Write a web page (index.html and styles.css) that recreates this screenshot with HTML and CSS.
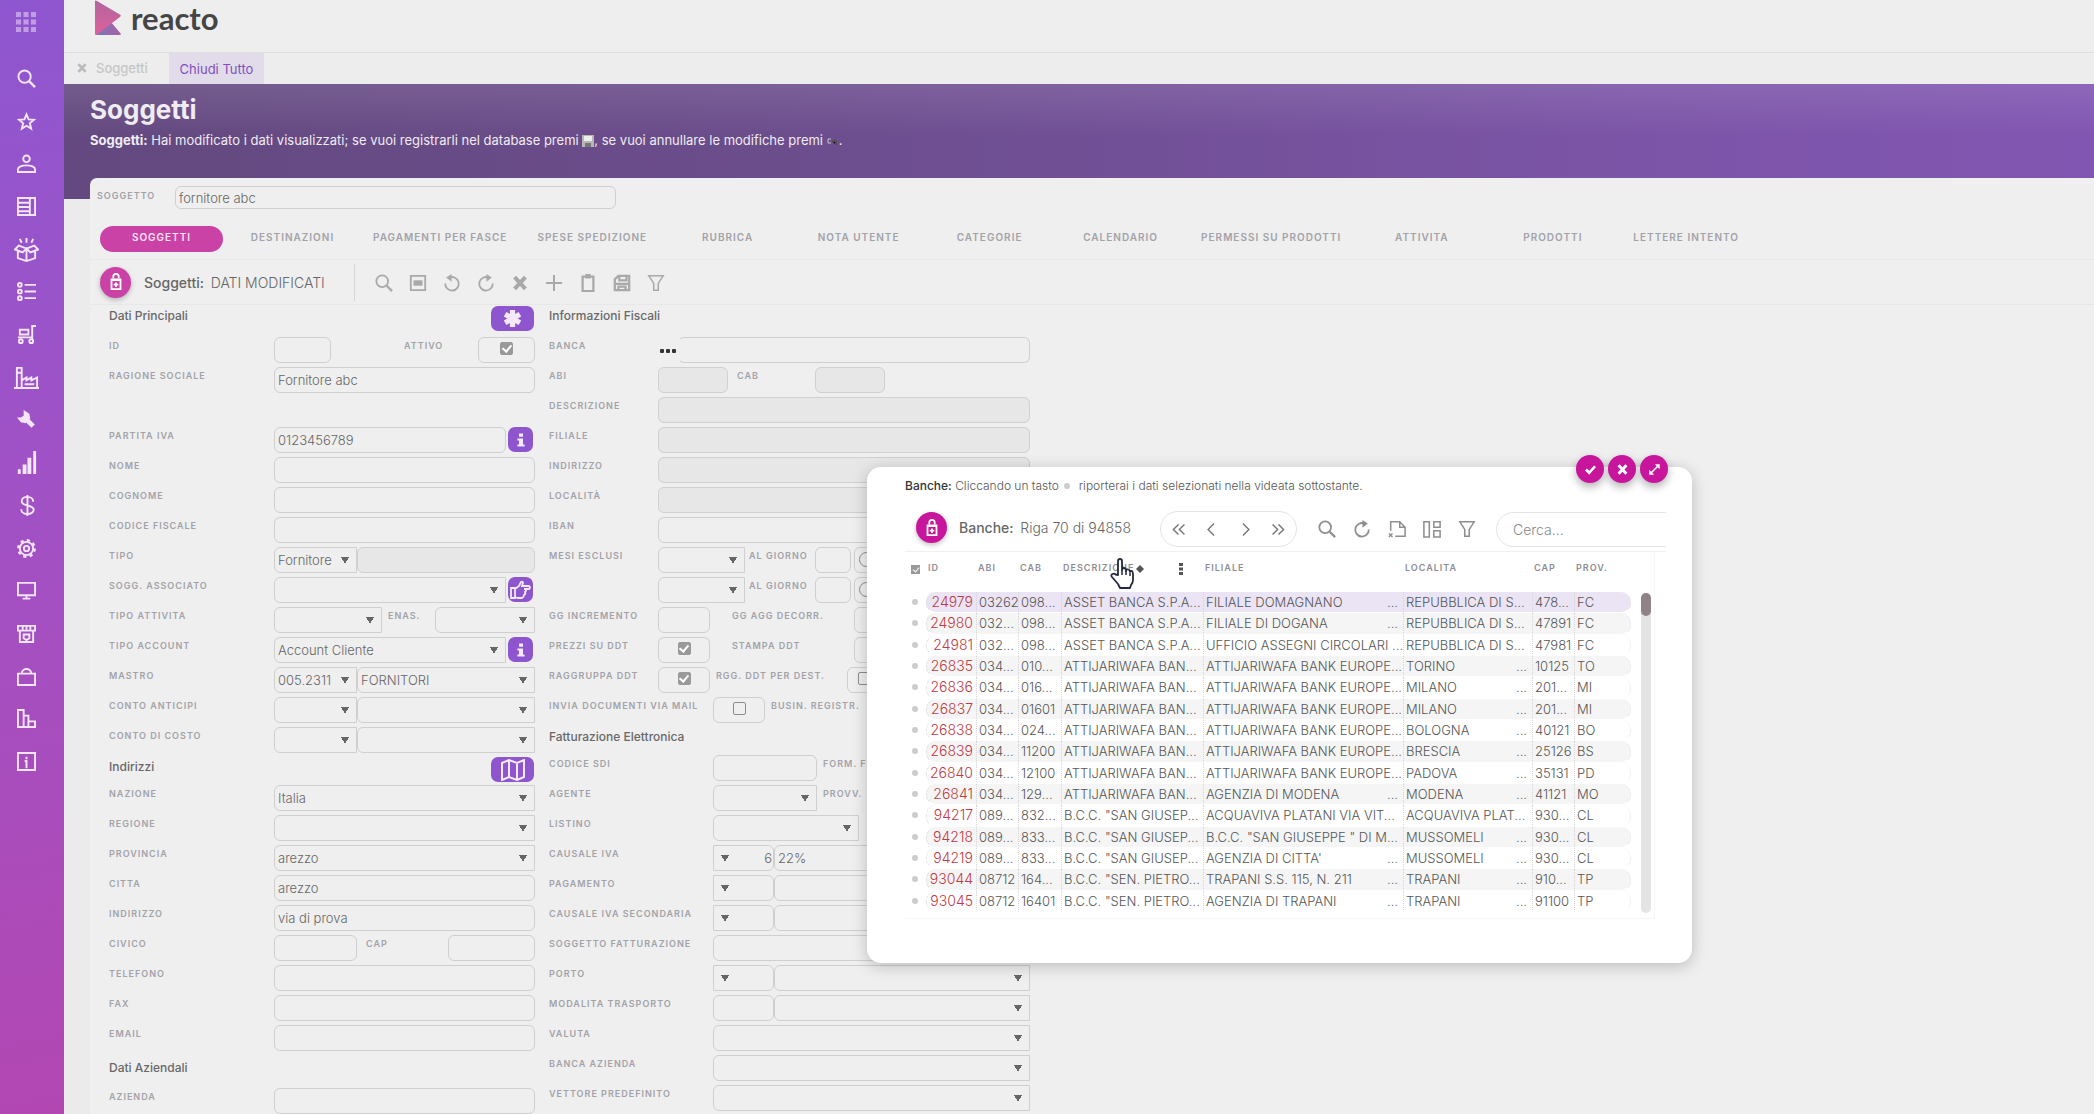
FILE: index.html
```html
<!DOCTYPE html>
<html lang="it">
<head>
    <meta charset="UTF-8">
    <meta name="viewport" content="width=device-width, initial-scale=1.0">
    <title>Reacto - Soggetti</title>
    <link rel="stylesheet" href="styles.css">
</head>
<body>
    <!-- icons used more than once -->
    <svg class="defs" width="0" height="0">
        <symbol id="i-search" viewBox="0 0 20 20"><circle cx="8" cy="8" r="6.5" fill="none" stroke="currentColor" stroke-width="2"/><path d="M13 13l6 6" stroke="currentColor" stroke-width="2.5" fill="none"/></symbol>
        <symbol id="i-redo" viewBox="0 0 20 20"><path d="M17.5 10.5A7.5 7.5 0 1 1 13 4h-2" fill="none" stroke="currentColor" stroke-width="2"/><path d="M10.5 0l6 4-6 4.500z" fill="currentColor"/></symbol>
        <symbol id="i-filter" viewBox="0 0 20 20"><path d="M2 2h16l-5.500 8.500V18h-5v-7.500z" fill="none" stroke="currentColor" stroke-width="1.700"/></symbol>
        <symbol id="i-lock" viewBox="0 0 20 20"><path d="M7 6V4a3 3 0 0 1 6 0v2" fill="none" stroke="currentColor" stroke-width="2"/><path fill-rule="evenodd" d="M4 6h12v13H4zM6 9v8h8V9z" fill="currentColor"/><path d="M7.500 13h5M10 10.500v5" stroke="currentColor" stroke-width="2"/></symbol>
        <symbol id="i-x" viewBox="0 0 20 20"><path d="M4 3.500l12 13M16 3.500l-12 13" stroke="currentColor" stroke-width="4.500" fill="none"/></symbol>
        <symbol id="i-info" viewBox="0 0 20 20"><path d="M7.500 2h5v4h-5zM5.500 8h7v7.500h2V18h-9v-2.500h2v-5h-2z" fill="currentColor"/></symbol>
    </svg>

    <div class="app">
        <aside class="sidebar">
            <button class="apps" aria-label="App"><svg viewBox="0 0 20 20" width="20" height="20"><path fill="currentColor" d="M0 0h5v5H0zM7.500 0h5v5h-5zM15 0h5v5h-5zM0 7.500h5v5H0zM7.500 7.500h5v5h-5zM15 7.500h5v5h-5zM0 15h5v5H0zM7.500 15h5v5h-5zM15 15h5v5h-5z"/></svg></button>
            <nav>
                <a href="#" aria-label="Cerca"><svg><use href="#i-search"/></svg></a>
                <a href="#" aria-label="Preferiti"><svg viewBox="0 0 20 20"><path d="M10 2.500l2.200 5.300 5.600.4-4.300 3.700 1.400 5.600L10 14.500l-4.900 3 1.400-5.600L2.200 8.200l5.600-.4z"/></svg></a>
                <a href="#" aria-label="Soggetti"><svg viewBox="0 0 20 20"><circle cx="10" cy="5" r="3.500"/><path d="M1 19v-3c0-2.500 4.300-4 9-4s9 1.500 9 4v3z"/></svg></a>
                <a href="#" aria-label="Documenti"><svg viewBox="0 0 20 20"><path d="M1 1h18v18H1zM13.500 1v18M1 6h12M1 10.500h12M1 15h12"/></svg></a>
                <a href="#" aria-label="Magazzino"><svg class="big" viewBox="0 0 26 26"><path d="M13 12l8-3 4 4-8 3-4-4-4 4-8-3 4-4zM13 12v13M4 15v7l9 3 9-3v-7M13 1v5M6 2l2 4M20 2l-2 4"/></svg></a>
                <a href="#" aria-label="Elenchi"><svg viewBox="0 0 20 20"><circle cx="3" cy="3" r="2"/><circle cx="3" cy="10" r="2"/><circle cx="3" cy="17" r="2"/><path d="M8 3h12M8 10h12M8 17h12"/></svg></a>
                <a href="#" aria-label="Trasporti"><svg viewBox="0 0 20 20"><path d="M20 1h-4v14M3 5h9v5H3zM1 13h15"/><circle cx="4" cy="17" r="2"/><circle cx="15" cy="17" r="2"/></svg></a>
                <a href="#" aria-label="Produzione"><svg class="big" viewBox="0 0 26 26"><path d="M0 24h26M3 24V3h5v21M3 8h5M8 16l5-3v3l5-3v3l6-3v11M11 20h10"/></svg></a>
                <a href="#" aria-label="Manutenzione"><svg viewBox="0 0 20 20"><path d="M8 8l9 9" stroke-width="5"/><path class="solid" d="M7 0l6 4 1 5-5 5-5-1-4-5h4l3-2z"/></svg></a>
                <a href="#" aria-label="Statistiche"><svg class="big" viewBox="0 0 26 26"><path class="solid" d="M4 20h3v5H4zM9 15h4v10H9zM14 8h4v17h-4zM20 1h3v24h-3z"/></svg></a>
                <a href="#" aria-label="Contabilita"><svg class="big" viewBox="0 0 26 26"><path d="M20 9c0-3-2.500-5-6-5s-6 2-6 4.500c0 6 12.500 3 12.500 9 0 2.500-3 4.500-6.500 4.500s-6.500-2-6.500-5M14 2v22"/></svg></a>
                <a href="#" aria-label="Impostazioni"><svg viewBox="0 0 20 20"><circle cx="10" cy="10" r="2.800"/><circle cx="10" cy="10" r="7"/><circle cx="10" cy="10" r="8.700" stroke-dasharray="3.400 3.430" stroke-width="2.400"/></svg></a>
                <a href="#" aria-label="Monitor"><svg viewBox="0 0 20 20"><path d="M1 2h18v13H1zM6 18.500h8M10 15v3"/></svg></a>
                <a href="#" aria-label="Negozio"><svg viewBox="0 0 20 20"><path d="M1 2h18v5H1zM3 7v12h14V7M6 2v5M10 2v5M14 2v5M7 11h6v4l-3 2-3-2z"/></svg></a>
                <a href="#" aria-label="Acquisti"><svg viewBox="0 0 20 20"><path d="M1 7h18v12H1zM5 7c0-6.500 10-6.500 10 0"/></svg></a>
                <a href="#" aria-label="Report"><svg viewBox="0 0 20 20"><path d="M1 1h6v18H1zM7 7h5v12M12 13h7v6H1M12 13v6"/></svg></a>
                <a href="#" aria-label="Informazioni"><svg viewBox="0 0 20 20"><path d="M1 1h18v18H1zM10 5v2.500M8 9.500h2V17"/></svg></a>
            </nav>
        </aside>

        <div class="main">
            <header class="topbar">
                <svg class="logo-mark" viewBox="0 0 27 36" width="27" height="36">
                    <defs>
                        <linearGradient id="lg1" x1="0" y1="0" x2="0" y2="1"><stop offset="0" stop-color="#b0669f"/><stop offset="1" stop-color="#e0609c"/></linearGradient>
                        <linearGradient id="lg2" x1="0" y1="0" x2="1" y2="0"><stop offset="0" stop-color="#7b78b5"/><stop offset="1" stop-color="#a85fa6"/></linearGradient>
                    </defs>
                    <path d="M17 22l10 12q0 1-2 1H3q-2 0-2-2z" fill="url(#lg2)"/>
                    <path d="M1 1q0-1 2 0l22 13q3 1 1 3L2 35q-1 0-1-2z" fill="url(#lg1)"/>
                </svg>
                <span class="logo-text">reacto</span>
            </header>

            <div class="open-tabs">
                <button class="open-tab"><svg width="12" height="12"><use href="#i-x"/></svg>Soggetti</button>
                <button class="close-all">Chiudi Tutto</button>
            </div>

            <div class="banner">
                <h1>Soggetti</h1>
                <p><b>Soggetti:</b> Hai modificato i dati visualizzati; se vuoi registrarli nel database premi
                    <svg class="disk" viewBox="0 0 12 12" width="12" height="12"><path fill="#b9b6b6" d="M0 0h12v12H0z"/><path fill="#eeeeee" d="M2 1h8v5H2z"/><path fill="#777777" d="M3 8h6v4H3z"/></svg>, se vuoi annullare le modifiche premi
                    <svg class="undo" viewBox="0 0 12 12" width="12" height="12"><path fill="none" stroke="#c9c3c9" d="M4 4H1v4h3"/><path stroke="#55504f" stroke-width="2" d="M5 6h4v4"/></svg>.</p>
            </div>

            <div class="content">
                <div class="search-row">
                    <label for="soggetto">Soggetto</label>
                    <input type="text" id="soggetto" value="fornitore abc">
                </div>

                <div class="tabs">
                    <button class="active">Soggetti</button>
                    <button>Destinazioni</button>
                    <button>Pagamenti per fasce</button>
                    <button>Spese spedizione</button>
                    <button>Rubrica</button>
                    <button>Nota utente</button>
                    <button>Categorie</button>
                    <button>Calendario</button>
                    <button>Permessi su prodotti</button>
                    <button>Attivita</button>
                    <button>Prodotti</button>
                    <button>Lettere intento</button>
                </div>

                <div class="toolbar">
                    <button class="round" aria-label="Blocca"><svg width="18" height="18"><use href="#i-lock"/></svg></button>
                    <h2>Soggetti: <span>DATI MODIFICATI</span></h2>
                    <div class="tools">
                        <button aria-label="Cerca"><svg><use href="#i-search"/></svg></button>
                        <button aria-label="Dettaglio"><svg viewBox="0 0 20 20"><path d="M2 2h16v16H2z" fill="none" stroke="currentColor" stroke-width="2"/><path d="M5 7h10v6H5z" fill="currentColor"/></svg></button>
                        <button aria-label="Annulla"><svg class="flip"><use href="#i-redo"/></svg></button>
                        <button aria-label="Aggiorna"><svg><use href="#i-redo"/></svg></button>
                        <button aria-label="Elimina"><svg><use href="#i-x"/></svg></button>
                        <button aria-label="Nuovo"><svg viewBox="0 0 20 20"><path d="M10 1v18M1 10h18" stroke="currentColor" stroke-width="2.200"/></svg></button>
                        <button aria-label="Incolla"><svg viewBox="0 0 20 20"><path d="M4 3h12v16H4z" fill="none" stroke="currentColor" stroke-width="2.500"/><path d="M7 0h6v5H7z" fill="currentColor"/></svg></button>
                        <button aria-label="Salva"><svg viewBox="0 0 20 20"><path d="M2 6l4-4h12v16H2zM7 2v5h8V2M3 11h14M6 18v-4h8v4" fill="none" stroke="currentColor" stroke-width="2.500"/></svg></button>
                        <button aria-label="Filtro"><svg><use href="#i-filter"/></svg></button>
                    </div>
                </div>

                <form class="form">
                    <div class="col">
                        <div class="title first"><h3>Dati Principali</h3>
                            <button type="button" class="act wide" aria-label="Obbligatori"><svg viewBox="0 0 20 20"><path d="M10 1v18M2.200 5.500l15.600 9M17.800 5.500l-15.600 9" stroke="currentColor" stroke-width="5.500"/></svg></button></div>
                        <div class="row"><label for="id">ID</label><input type="text" id="id" class="w57"><label class="sub attivo" for="attivo">Attivo</label><span class="check w57"><input type="checkbox" id="attivo" checked></span></div>
                        <div class="row double"><label for="ragione">Ragione sociale</label><input type="text" id="ragione" class="fill" value="Fornitore abc"></div>
                        <div class="row"><label for="piva">Partita IVA</label><input type="text" id="piva" class="fill" value="0123456789"><button type="button" class="act" aria-label="Info partita IVA"><svg><use href="#i-info"/></svg></button></div>
                        <div class="row"><label for="nome">Nome</label><input type="text" id="nome" class="fill"></div>
                        <div class="row"><label for="cognome">Cognome</label><input type="text" id="cognome" class="fill"></div>
                        <div class="row"><label for="cf">Codice fiscale</label><input type="text" id="cf" class="fill"></div>
                        <div class="row"><label for="tipo">Tipo</label><select id="tipo" class="w83"><option>Fornitore</option></select><input type="text" class="fill off" aria-label="Descrizione tipo" disabled></div>
                        <div class="row"><label for="associato">Sogg. associato</label><select id="associato" class="fill"><option></option></select><button type="button" class="act" aria-label="Apri soggetto"><svg class="hand" viewBox="0 0 22 20"><path d="M1 8h4v10H1zM5 9l4-3 2-4q2-1 2 1l-1 3h7q2 1.500 0 3h-5M15 9q2 1.500 0 3 1 2-1 3 0 2-2 3H8l-3-1" fill="none" stroke="currentColor" stroke-width="1.800"/></svg></button></div>
                        <div class="row"><label for="attivita">Tipo attivita</label><select id="attivita" class="w108"><option></option></select><label class="sub" for="enas">Enas.</label><select id="enas" class="w100 end"><option></option></select></div>
                        <div class="row"><label for="account">Tipo account</label><select id="account" class="fill"><option>Account Cliente</option></select><button type="button" class="act" aria-label="Info account"><svg><use href="#i-info"/></svg></button></div>
                        <div class="row"><label for="mastro">Mastro</label><select id="mastro" class="w83"><option>005.2311</option></select><select class="fill" aria-label="Descrizione mastro"><option>FORNITORI</option></select></div>
                        <div class="row"><label for="anticipi">Conto anticipi</label><select id="anticipi" class="w83"><option></option></select><select class="fill" aria-label="Descrizione conto anticipi"><option></option></select></div>
                        <div class="row"><label for="costo">Conto di costo</label><select id="costo" class="w83"><option></option></select><select class="fill" aria-label="Descrizione conto di costo"><option></option></select></div>

                        <div class="title"><h3>Indirizzi</h3>
                            <button type="button" class="act wide" aria-label="Mappa"><svg class="map" viewBox="0 0 26 22"><path d="M2 4l7-3 8 3 7-3v17l-7 3-8-3-7 3zM9 1v17M17 4v17" fill="none" stroke="currentColor" stroke-width="2"/></svg></button></div>
                        <div class="row"><label for="nazione">Nazione</label><select id="nazione" class="fill"><option>Italia</option></select></div>
                        <div class="row"><label for="regione">Regione</label><select id="regione" class="fill"><option></option></select></div>
                        <div class="row"><label for="provincia">Provincia</label><select id="provincia" class="fill"><option>arezzo</option></select></div>
                        <div class="row"><label for="citta">Citta</label><input type="text" id="citta" class="fill" value="arezzo"></div>
                        <div class="row"><label for="via">Indirizzo</label><input type="text" id="via" class="fill" value="via di prova"></div>
                        <div class="row"><label for="civico">Civico</label><input type="text" id="civico" class="w83"><label class="sub civ" for="cap">CAP</label><input type="text" id="cap" class="w87 end"></div>
                        <div class="row"><label for="telefono">Telefono</label><input type="text" id="telefono" class="fill"></div>
                        <div class="row"><label for="fax">Fax</label><input type="text" id="fax" class="fill"></div>
                        <div class="row"><label for="email">Email</label><input type="text" id="email" class="fill"></div>

                        <div class="title last"><h3>Dati Aziendali</h3></div>
                        <div class="row"><label for="azienda">Azienda</label><input type="text" id="azienda" class="fill"></div>
                    </div>

                    <div class="col fiscal">
                        <div class="title first"><h3>Informazioni Fiscali</h3></div>
                        <div class="row"><label for="banca">Banca</label><button type="button" class="dots" aria-label="Scegli banca"><i></i><i></i><i></i></button><input type="text" id="banca" class="fill open"></div>
                        <div class="row"><label for="abi">ABI</label><input type="text" id="abi" class="w70 off" disabled><label class="sub cab" for="cab">CAB</label><input type="text" id="cab" class="w70 off" disabled></div>
                        <div class="row"><label for="descr">Descrizione</label><input type="text" id="descr" class="fill off" disabled></div>
                        <div class="row"><label for="filiale">Filiale</label><input type="text" id="filiale" class="fill off" disabled></div>
                        <div class="row"><label for="ind-banca">Indirizzo</label><input type="text" id="ind-banca" class="fill off" disabled></div>
                        <div class="row"><label for="localita">Località</label><input type="text" id="localita" class="fill off" disabled></div>
                        <div class="row"><label for="iban">IBAN</label><input type="text" id="iban" class="fill"></div>
                        <div class="row"><label for="mesi1">Mesi esclusi</label><select id="mesi1" class="w87"><option></option></select><label class="sub giorno" for="giorno1">Al giorno</label><input type="text" id="giorno1" class="w36"><span class="check start w57"><input type="radio" aria-label="Fine mese 1"></span></div>
                        <div class="row"><label for="mesi2"></label><select id="mesi2" class="w87" aria-label="Mesi esclusi 2"><option></option></select><label class="sub giorno" for="giorno2">Al giorno</label><input type="text" id="giorno2" class="w36"><span class="check start w57"><input type="radio" aria-label="Fine mese 2"></span></div>
                        <div class="row"><label for="incremento">GG incremento</label><input type="text" id="incremento" class="w52"><label class="sub agg" for="decorr">GG agg decorr.</label><input type="text" id="decorr" class="w52"></div>
                        <div class="row"><label for="prezzi">Prezzi su DDT</label><span class="check w52"><input type="checkbox" id="prezzi" checked></span><label class="sub agg" for="stampa">Stampa DDT</label><span class="check w52"><input type="checkbox" id="stampa"></span></div>
                        <div class="row"><label for="raggruppa">Raggruppa DDT</label><span class="check w52"><input type="checkbox" id="raggruppa" checked></span><label class="sub rgg" for="rgg">Rgg. DDT per dest.</label><span class="check start w57"><input type="checkbox" id="rgg"></span></div>
                        <div class="row long"><label for="mail">Invia documenti via mail</label><span class="check w52"><input type="checkbox" id="mail"></span><label class="sub" for="busin">Busin. registr.</label></div>

                        <div class="title"><h3>Fatturazione Elettronica</h3></div>
                        <div class="row long"><label for="sdi">Codice SDI</label><input type="text" id="sdi" class="w104"><label class="sub" for="fe">Form. FE</label><select id="fe" class="w100 end"><option></option></select></div>
                        <div class="row long"><label for="agente">Agente</label><select id="agente" class="w104"><option></option></select><label class="sub" for="provv">Provv.</label><input type="text" id="provv" class="w100 end"></div>
                        <div class="row long"><label for="listino">Listino</label><select id="listino" class="w146"><option></option></select></div>
                        <div class="row long"><label for="iva">Causale IVA</label><select id="iva" class="left w61"><option>6</option></select><input type="text" class="fill" aria-label="Descrizione IVA" value="22%"></div>
                        <div class="row long"><label for="pagamento">Pagamento</label><select id="pagamento" class="left w61"><option></option></select><input type="text" class="fill" aria-label="Descrizione pagamento"></div>
                        <div class="row long"><label for="iva2">Causale IVA secondaria</label><select id="iva2" class="left w61"><option></option></select><input type="text" class="fill" aria-label="Descrizione IVA secondaria"></div>
                        <div class="row long"><label for="soggfatt">Soggetto fatturazione</label><input type="text" id="soggfatt" class="fill"></div>
                        <div class="row long"><label for="porto">Porto</label><select id="porto" class="left w61"><option></option></select><select class="fill" aria-label="Descrizione porto"><option></option></select></div>
                        <div class="row long"><label for="trasporto">Modalita trasporto</label><input type="text" id="trasporto" class="w61"><select class="fill" aria-label="Descrizione trasporto"><option></option></select></div>
                        <div class="row long"><label for="valuta">Valuta</label><select id="valuta" class="fill"><option></option></select></div>
                        <div class="row long"><label for="bancaaz">Banca azienda</label><select id="bancaaz" class="fill"><option></option></select></div>
                        <div class="row long"><label for="vettore">Vettore predefinito</label><select id="vettore" class="fill"><option></option></select></div>
                    </div>
                </form>
            </div>
        </div>
    </div>

    <!-- bank lookup popup -->
    <section class="popup" role="dialog" aria-label="Banche">
        <div class="popup-actions">
            <button aria-label="Conferma"><svg viewBox="0 0 20 20"><path d="M3 10l5 5 9-10" fill="none" stroke="currentColor" stroke-width="4"/></svg></button>
            <button aria-label="Chiudi"><svg><use href="#i-x"/></svg></button>
            <button aria-label="Espandi"><svg viewBox="0 0 20 20"><path d="M5 15L15 5" stroke="currentColor" stroke-width="2.500"/><path fill="currentColor" d="M10.500 2H18v7.500zM2 10.500V18h7.500z"/></svg></button>
        </div>
        <p class="hint"><b>Banche:</b> Cliccando un tasto <i class="bullet"></i> riporterai i dati selezionati nella videata sottostante.</p>

        <div class="popup-bar">
            <button class="round" aria-label="Blocca"><svg width="18" height="18"><use href="#i-lock"/></svg></button>
            <h2>Banche: <span>Riga 70 di 94858</span></h2>
            <div class="pager">
                <button aria-label="Prima"><svg viewBox="0 0 20 20"><path d="M10 4l-6 6 6 6M17 4l-6 6 6 6"/></svg></button>
                <button aria-label="Precedente"><svg viewBox="0 0 20 20"><path d="M13 3l-7 7 7 7"/></svg></button>
                <button aria-label="Successiva"><svg viewBox="0 0 20 20"><path d="M7 3l7 7-7 7"/></svg></button>
                <button aria-label="Ultima"><svg viewBox="0 0 20 20"><path d="M3 4l6 6-6 6M10 4l6 6-6 6"/></svg></button>
            </div>
            <div class="tools">
                <button aria-label="Cerca"><svg><use href="#i-search"/></svg></button>
                <button aria-label="Aggiorna"><svg><use href="#i-redo"/></svg></button>
                <button aria-label="Esporta"><svg viewBox="0 0 20 20"><path d="M3 12V2h10l6 6v10H8M13 2v6h6" fill="none" stroke="currentColor" stroke-width="1.700"/><path d="M1 15l4 4M5 15l-4 4" stroke="currentColor" stroke-width="1.500"/></svg></button>
                <button aria-label="Colonne"><svg viewBox="0 0 20 20"><path d="M1 2h6v17H1zM12 2h7v6h-7zM12 12h7v7h-7z" fill="none" stroke="currentColor" stroke-width="1.700"/></svg></button>
                <button aria-label="Filtro"><svg><use href="#i-filter"/></svg></button>
            </div>
            <input type="text" class="find" placeholder="Cerca..." aria-label="Cerca">
        </div>

        <div class="grid-wrap">
            <table class="banks">
                <colgroup><col class="c-dot"><col class="c-id"><col class="c-abi"><col class="c-cab"><col class="c-desc"><col class="c-fil"><col class="c-loc"><col class="c-cap"><col class="c-prov"></colgroup>
                <thead>
                    <tr><th><input type="checkbox" checked aria-label="Seleziona tutto"></th><th>ID</th><th>ABI</th><th>CAB</th><th><div class="sorted">Descrizione<svg viewBox="0 0 8 8" width="8" height="8"><path d="M4 0l4 4-4 4-4-4z" fill="currentColor"/></svg><svg class="kebab" viewBox="0 0 4 12" width="4" height="12"><path d="M0 0h4v3H0zM0 4.500h4v3H0zM0 9h4v3H0z" fill="currentColor"/></svg></div></th><th>Filiale</th><th>Localita</th><th>CAP</th><th>Prov.</th></tr>
                </thead>
                <tbody>
                    <tr class="selected"><td><i class="bullet"></i></td><td>24979</td><td>03262</td><td>098...</td><td>ASSET BANCA S.P.A...</td><td>FILIALE DOMAGNANO<span>...</span></td><td>REPUBBLICA DI S...</td><td>478...</td><td>FC</td></tr>
                    <tr><td><i class="bullet"></i></td><td>24980</td><td>032...</td><td>098...</td><td>ASSET BANCA S.P.A...</td><td>FILIALE DI DOGANA<span>...</span></td><td>REPUBBLICA DI S...</td><td>47891</td><td>FC</td></tr>
                    <tr><td><i class="bullet"></i></td><td>24981</td><td>032...</td><td>098...</td><td>ASSET BANCA S.P.A...</td><td>UFFICIO ASSEGNI CIRCOLARI ...</td><td>REPUBBLICA DI S...</td><td>47981</td><td>FC</td></tr>
                    <tr><td><i class="bullet"></i></td><td>26835</td><td>034...</td><td>010...</td><td>ATTIJARIWAFA BAN...</td><td>ATTIJARIWAFA BANK EUROPE...</td><td>TORINO<span>...</span></td><td>10125</td><td>TO</td></tr>
                    <tr><td><i class="bullet"></i></td><td>26836</td><td>034...</td><td>016...</td><td>ATTIJARIWAFA BAN...</td><td>ATTIJARIWAFA BANK EUROPE...</td><td>MILANO<span>...</span></td><td>201...</td><td>MI</td></tr>
                    <tr><td><i class="bullet"></i></td><td>26837</td><td>034...</td><td>01601</td><td>ATTIJARIWAFA BAN...</td><td>ATTIJARIWAFA BANK EUROPE...</td><td>MILANO<span>...</span></td><td>201...</td><td>MI</td></tr>
                    <tr><td><i class="bullet"></i></td><td>26838</td><td>034...</td><td>024...</td><td>ATTIJARIWAFA BAN...</td><td>ATTIJARIWAFA BANK EUROPE...</td><td>BOLOGNA<span>...</span></td><td>40121</td><td>BO</td></tr>
                    <tr><td><i class="bullet"></i></td><td>26839</td><td>034...</td><td>11200</td><td>ATTIJARIWAFA BAN...</td><td>ATTIJARIWAFA BANK EUROPE...</td><td>BRESCIA<span>...</span></td><td>25126</td><td>BS</td></tr>
                    <tr><td><i class="bullet"></i></td><td>26840</td><td>034...</td><td>12100</td><td>ATTIJARIWAFA BAN...</td><td>ATTIJARIWAFA BANK EUROPE...</td><td>PADOVA<span>...</span></td><td>35131</td><td>PD</td></tr>
                    <tr><td><i class="bullet"></i></td><td>26841</td><td>034...</td><td>129...</td><td>ATTIJARIWAFA BAN...</td><td>AGENZIA DI MODENA<span>...</span></td><td>MODENA<span>...</span></td><td>41121</td><td>MO</td></tr>
                    <tr><td><i class="bullet"></i></td><td>94217</td><td>089...</td><td>832...</td><td>B.C.C. "SAN GIUSEP...</td><td>ACQUAVIVA PLATANI VIA VIT...</td><td>ACQUAVIVA PLAT...</td><td>930...</td><td>CL</td></tr>
                    <tr><td><i class="bullet"></i></td><td>94218</td><td>089...</td><td>833...</td><td>B.C.C. "SAN GIUSEP...</td><td>B.C.C. "SAN GIUSEPPE " DI M...</td><td>MUSSOMELI<span>...</span></td><td>930...</td><td>CL</td></tr>
                    <tr><td><i class="bullet"></i></td><td>94219</td><td>089...</td><td>833...</td><td>B.C.C. "SAN GIUSEP...</td><td>AGENZIA DI CITTA'<span>...</span></td><td>MUSSOMELI<span>...</span></td><td>930...</td><td>CL</td></tr>
                    <tr><td><i class="bullet"></i></td><td>93044</td><td>08712</td><td>164...</td><td>B.C.C. "SEN. PIETRO...</td><td>TRAPANI S.S. 115, N. 211<span>...</span></td><td>TRAPANI<span>...</span></td><td>910...</td><td>TP</td></tr>
                    <tr><td><i class="bullet"></i></td><td>93045</td><td>08712</td><td>16401</td><td>B.C.C. "SEN. PIETRO...</td><td>AGENZIA DI TRAPANI<span>...</span></td><td>TRAPANI<span>...</span></td><td>91100</td><td>TP</td></tr>
                </tbody>
            </table>
            <div class="scroll"><div class="thumb"></div></div>
        </div>

        <svg class="pointer" viewBox="0 0 24 32" width="24" height="32"><path d="M8 17V3q0-2 2-2t2 2v9q0-2 2-2t2 3q0-2 2-1.500t2 2.500q0-1.500 1.500-1t1.500 3v6q0 3-2 5l-1 3H10l-2-4-6-7q-1.500-2 .5-3t3 .5z" fill="#fff" stroke="#222a3f" stroke-width="1.800" stroke-linejoin="round"/><path d="M12 12v5M16 13v4M20 15v3" stroke="#222a3f" stroke-width="1.500"/></svg>
    </section>
</body>
</html>
```
FILE: styles.css
```css
* {
    box-sizing: border-box;
}
body {
    margin: 0;
    height: 100vh;
    overflow: hidden;
    position: relative;
    font-family: Inter, "Liberation Sans", sans-serif;
    font-size: 14px;
    color: #666666;
    background-color: #ebebeb;
}
h1, h2, h3, p {
    margin: 0;
}
button {
    font-family: inherit;
    border: none;
    background: none;
    padding: 0;
    color: inherit;
    cursor: pointer;
}
svg {
    display: block;
}
.defs {
    position: absolute;
}
.app {
    display: flex;
    height: 100vh;
}

/* sidebar */
.sidebar {
    flex: none;
    width: 64px;
    background: linear-gradient(170deg, #8e56cf, #9f52c6 40%, #b247b2);
    color: #f3e6fa;
}
.apps {
    display: block;
    margin: 12px 0 25px 16px;
    opacity: 0.5;
}
.sidebar nav {
    display: flex;
    flex-direction: column;
    height: 726px;
}
.sidebar a {
    flex: 1;
    display: flex;
    align-items: center;
    justify-content: center;
    width: 52px;
    color: inherit;
}
.sidebar a svg {
    width: 19px;
    height: 19px;
    fill: none;
    stroke: currentColor;
    stroke-width: 2;
}
.sidebar a .big {
    width: 25px;
    height: 25px;
}
.sidebar .solid {
    fill: currentColor;
    stroke: none;
}

/* header */
.main {
    flex: 1;
    min-width: 0;
    overflow: hidden;
}
.topbar {
    display: flex;
    height: 53px;
    padding-left: 30px;
    border-bottom: 1px solid #dddddd;
    background-color: #eeeeee;
}
.logo-text {
    margin-left: 10px;
    font-family: Lato, sans-serif;
    font-size: 31px;
    font-weight: 700;
    line-height: 36px;
    color: #454545;
}
.open-tabs {
    display: flex;
    height: 31px;
    background-color: #ededed;
}
.open-tab {
    display: flex;
    align-items: center;
    gap: 8px;
    width: 105px;
    padding: 0 0 2px 12px;
    font-size: 13px;
    font-weight: 500;
    color: #c6c6c6;
}
.open-tab svg {
    color: #bbbbbb;
}
.close-all {
    width: 95px;
    background-color: #e2dcea;
    font-size: 13px;
    color: #7f4fc0;
}
.banner {
    height: 115px;
    padding: 10px 26px;
    background: linear-gradient(rgba(255, 255, 255, 0.1), rgba(255, 255, 255, 0) 45%), linear-gradient(90deg, #63497f, #6b4d8c 35%, #7b54a6 75%, #8156b2);
    color: #efecf2;
}
.banner h1 {
    font-size: 26px;
    line-height: 32px;
    font-weight: 700;
}
.banner p {
    margin-top: 4px;
    font-size: 13px;
    line-height: 20px;
}
.banner p svg {
    display: inline-block;
    vertical-align: -2px;
}

/* main card */
.content {
    position: relative;
    margin: -21px 0 0 26px;
    border-top-left-radius: 7px;
    background-color: #efefef;
}
.search-row {
    display: flex;
    height: 42px;
    padding: 8px 7px;
}
.search-row label {
    width: 78px;
    line-height: 20px;
}
label, .tabs button, .banks th {
    font-size: 9px;
    font-weight: 600;
    letter-spacing: 1px;
    text-transform: uppercase;
    color: #a2a2a9;
    white-space: nowrap;
}
.tabs {
    display: flex;
    align-items: flex-start;
    height: 40px;
    padding: 6px 6px 0;
    border-bottom: 1px solid #e9e9e9;
}
.tabs button {
    min-width: 123px;
    height: 26px;
    margin: 0 4px;
    padding: 0 11px 4px;
    border-radius: 13px;
    font-size: 10px;
}
.tabs .active {
    background-color: #cb42a6;
    color: #fbe6f5;
}
.toolbar {
    display: flex;
    align-items: center;
    height: 45px;
    padding-left: 10px;
    border-bottom: 1px solid #e8e8e8;
}
.round {
    display: flex;
    align-items: center;
    justify-content: center;
    flex: none;
    width: 31px;
    height: 31px;
    border-radius: 50%;
    background-color: #cb42a6;
    color: #ffffff;
    box-shadow: 0 2px 5px rgba(0, 0, 0, 0.25);
}
h2 {
    font-size: 14px;
    font-weight: 500;
    color: #666666;
    white-space: nowrap;
}
h2 span {
    margin-left: 3px;
    font-weight: 300;
}
.toolbar h2 {
    width: 210px;
    margin-left: 13px;
}
.tools {
    display: flex;
    align-items: center;
    color: #a9a9a9;
}
.toolbar .tools {
    height: 37px;
    padding-left: 12px;
    border-left: 1px solid #d5d5d5;
}
.tools button {
    width: 34px;
}
.tools svg {
    width: 18px;
    height: 18px;
    margin: 2px auto 0;
}
.flip {
    transform: scaleX(-1);
}

/* form */
.form {
    display: flex;
    gap: 14px;
    padding: 1px 0 0 19px;
}
.col {
    width: 426px;
}
.fiscal {
    width: 481px;
}
.title {
    display: flex;
    justify-content: space-between;
    height: 28px;
    padding-right: 1px;
}
.title.first {
    height: 31px;
}
.title.last {
    height: 33px;
}
h3 {
    font-size: 12px;
    line-height: 20px;
    font-weight: 500;
    color: #686868;
}
.last h3 {
    line-height: 26px;
}
.row {
    display: flex;
    height: 30px;
}
.row.double {
    height: 60px;
}
.row > label {
    flex: none;
    width: 165px;
    line-height: 18px;
}
.fiscal .row > label {
    width: 109px;
}
.fiscal .long > label {
    width: 164px;
}
.row > .sub, .fiscal .row > .sub {
    width: auto;
    margin-left: 6px;
}
.row > .attivo {
    margin-left: 73px;
}
.row > .civ {
    margin-left: 9px;
}
.fiscal .row > .cab {
    width: 78px;
    margin-left: 9px;
}
.fiscal .row > .giorno {
    width: 66px;
    margin-left: 4px;
}
.fiscal .row > .agg {
    width: 122px;
    margin-left: 22px;
}
.fiscal .row > .rgg {
    width: 131px;
}
input[type="text"], select, .check {
    height: 26px;
    padding: 0 3px;
    border: 1px solid #cfcfcf;
    border-radius: 6px;
    background-color: transparent;
    font-family: inherit;
    font-size: 13px;
    font-weight: 300;
    color: #666666;
}
.search-row input[type="text"] {
    width: 441px;
    height: 23px;
}
/* triangle made from two small gradients */
select {
    appearance: none;
    border-radius: 6px 0 0 6px;
    background-image: linear-gradient(to top right, transparent 50%, #666666 50%), linear-gradient(to top left, transparent 50%, #666666 50%);
    background-size: 4px 7px;
    background-position: right 11px top 9px, right 7px top 9px;
    background-repeat: no-repeat;
}
select.left {
    border-radius: 0 6px 6px 0;
    background-position: left 7px top 9px, left 11px top 9px;
    text-align: right;
    text-align-last: right;
    padding: 0 1px;
}
input.off {
    border-color: #d0d0d0;
    background-color: #e7e7e7;
}
.row > .open {
    border-left-color: transparent;
}
.fill {
    flex: 1;
    min-width: 0;
}
.end, .check.w57 {
    margin-left: auto;
}
.row > .start {
    margin-left: 3px;
}
.row > .rgg + .start {
    margin-left: 0;
    padding-left: 10px;
}
.w36 { width: 36px; }
.w52 { width: 52px; }
.w57 { width: 57px; }
.w61 { width: 61px; }
.w70 { width: 70px; }
.w83 { width: 83px; }
.w87 { width: 87px; }
.w100 { width: 100px; }
.w104 { width: 104px; }
.w108 { width: 108px; }
.w146 { width: 146px; }
.check {
    display: flex;
    align-items: flex-start;
    justify-content: center;
    padding-top: 4px;
}
.check.start {
    justify-content: flex-start;
    padding-left: 4px;
}
input[type="checkbox"], input[type="radio"] {
    appearance: none;
    width: 13px;
    height: 13px;
    margin: 0;
    border: 1px solid #8c8c8c;
    border-radius: 2px;
}
input[type="radio"] {
    width: 15px;
    height: 15px;
    border-radius: 50%;
}
input[type="checkbox"]:checked {
    border-color: #999999;
    background-color: #999999;
}
input[type="checkbox"]:checked::after {
    content: "";
    display: block;
    width: 4px;
    height: 7px;
    margin: 0 auto;
    border: solid #ffffff;
    border-width: 0 2px 2px 0;
    transform: rotate(40deg);
}
.act {
    flex: none;
    width: 25px;
    height: 25px;
    margin: 0 2px;
    border-radius: 7px;
    background-color: #8d55ce;
    color: #f4eafb;
}
.title .act {
    width: 43px;
    margin: 0;
}
.act svg {
    width: 16px;
    height: 16px;
    margin: 0 auto;
}
.title .act svg {
    width: 19px;
    height: 19px;
}
.act .hand {
    width: 22px;
    height: 20px;
}
.title .act .map {
    width: 26px;
    height: 22px;
}
.dots {
    display: flex;
    align-items: center;
    gap: 2px;
    width: 20px;
    height: 28px;
    padding-left: 2px;
}
.dots i {
    width: 4px;
    height: 4px;
    border-radius: 1px;
    background-color: #333333;
}

/* popup */
.popup {
    position: absolute;
    left: 867px;
    top: 467px;
    width: 825px;
    height: 496px;
    padding: 9px 26px 0 38px;
    border-radius: 14px;
    background-color: #ffffff;
    box-shadow: 0 3px 16px rgba(0, 0, 0, 0.22);
}
.popup-actions {
    position: absolute;
    top: -12px;
    right: 24px;
    display: flex;
    gap: 4px;
}
.popup-actions button {
    width: 28px;
    height: 28px;
    border-radius: 50%;
    background-color: #c7169b;
    color: #ffffff;
    box-shadow: 0 4px 8px rgba(0, 0, 0, 0.3);
}
.popup-actions svg {
    width: 13px;
    height: 13px;
    margin: 0 auto;
}
.hint {
    font-size: 12px;
    line-height: 20px;
    color: #555555;
    font-weight: 300;
    white-space: nowrap;
}
.hint b {
    font-weight: 500;
    color: #333333;
}
.bullet {
    display: inline-block;
    width: 6px;
    height: 6px;
    border-radius: 50%;
    background-color: #cccccc;
}
.hint .bullet {
    margin: 0 5px 1px 2px;
}
.popup-bar {
    display: flex;
    align-items: center;
    height: 48px;
    margin-top: 8px;
    padding-left: 11px;
    overflow: hidden;
    border-bottom: 1px solid #f0f0f0;
}
.popup-bar .round {
    background-color: #c7169b;
}
.popup-bar h2 {
    flex: none;
    width: 201px;
    margin-left: 12px;
}
.pager {
    display: flex;
    align-items: center;
    flex: none;
    width: 137px;
    height: 36px;
    margin-top: 3px;
    padding: 0 1px;
    border: 1px solid #e4e4e4;
    border-radius: 18px;
}
.pager button {
    flex: 1;
}
.pager svg {
    width: 17px;
    height: 17px;
    margin: 0 auto;
    fill: none;
    stroke: #777777;
    stroke-width: 1.7;
}
.popup-bar .tools {
    flex: none;
    margin-left: 12px;
    color: #8e8e8e;
}
.popup-bar .tools button {
    width: 35px;
}
.popup-bar .find {
    flex: none;
    width: 200px;
    height: 35px;
    margin: 3px 0 0 12px;
    padding-left: 16px;
    border-color: #e4e4e4;
    border-radius: 18px;
    font-size: 14px;
}
.find::placeholder {
    color: #888888;
    opacity: 1;
}
.grid-wrap {
    display: flex;
    width: 750px;
    height: 367px;
    border: solid #f7f7f7;
    border-width: 0 1px 1px 0;
}
.banks {
    table-layout: fixed;
    width: 726px;
    height: 360px;
    border-collapse: separate;
    border-spacing: 0;
}
.c-dot { width: 21px; }
.c-id { width: 50px; }
.c-abi { width: 42px; }
.c-cab { width: 43px; }
.c-desc { width: 142px; }
.c-fil { width: 200px; }
.c-loc { width: 129px; }
.c-cap { width: 42px; }
.c-prov { width: 57px; }
.banks th {
    height: 40px;
    padding: 0 0 9px 2px;
    text-align: left;
    color: #8d8d93;
}
.banks th:first-child {
    padding: 0 0 5px 6px;
}
.banks th input {
    width: 9px;
    height: 9px;
    border-radius: 0;
    display: block;
}
.banks th input:checked::after {
    width: 3px;
    height: 5px;
    border-width: 0 1px 1px 0;
}
.sorted {
    display: flex;
    align-items: center;
    gap: 2px;
    height: 11px;
}
.banks th svg {
    color: #555555;
    margin-top: 3px;
}
.banks .kebab {
    margin-left: auto;
    margin-right: 20px;
}
.banks td {
    padding: 0 0 0 2px;
    border-left: 1px dotted #d5d5d5;
    border-bottom: 1px solid #ffffff;
    font-size: 13px;
    font-weight: 300;
    line-height: 20px;
    white-space: nowrap;
    color: #555555;
}
.banks td:first-child {
    padding-left: 7px;
    border-left: none;
}
.banks td:first-child .bullet {
    vertical-align: 2px;
}
.banks td:nth-child(2) {
    padding-right: 3px;
    font-size: 14px;
    text-align: right;
    color: #c03a44;
    border-radius: 10px 0 0 10px;
}
.banks td:last-child {
    border-right: 1px dotted #e2e2e2;
    border-radius: 0 10px 10px 0;
}
.banks tbody tr:nth-child(even) td:not(:first-child) {
    background-color: #f5f5f5;
}
.banks tbody .selected td:not(:first-child) {
    background-color: #ebe4f4;
}
.banks td span {
    float: right;
    margin-right: 5px;
}
.scroll {
    width: 10px;
    height: 320px;
    margin: 41px 0 0 10px;
    border-radius: 5px;
    background-color: #e4e4e4;
}
.thumb {
    height: 23px;
    border-radius: 5px;
    background-color: #8f8289;
}
.pointer {
    position: absolute;
    left: 243px;
    top: 91px;
}
```
